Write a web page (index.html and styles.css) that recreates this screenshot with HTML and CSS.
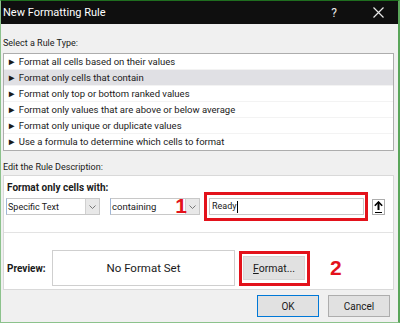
FILE: index.html
```
<!DOCTYPE html>
<html>

<head>
    <meta charset="UTF-8">
    <title>New Formatting Rule</title>
    <link rel="stylesheet" href="styles.css">
</head>

<body>
    <div class="dialog">
        <div class="titlebar">
            <span class="title">New Formatting Rule</span>
            <span class="help">?</span>
            <svg class="close" width="11" height="11" viewBox="0 0 11 11">
                <path d="M0.5 0.5 L10.5 10.5 M10.5 0.5 L0.5 10.5" stroke="#e8e8e8" stroke-width="1.2" fill="none" />
            </svg>
        </div>

        <div class="content">
            <div class="label first">Select a Rule Type:</div>
            <div class="rule-list">
                <div class="rule">&#9658; Format all cells based on their values</div>
                <div class="rule selected">&#9658; Format only cells that contain</div>
                <div class="rule">&#9658; Format only top or bottom ranked values</div>
                <div class="rule">&#9658; Format only values that are above or below average</div>
                <div class="rule">&#9658; Format only unique or duplicate values</div>
                <div class="rule">&#9658; Use a formula to determine which cells to format</div>
            </div>

            <div class="label second">Edit the Rule Description:</div>
            <div class="desc">
                <div class="cond">
                    <div class="cond-title">Format only cells with:</div>
                    <div class="cond-row">
                        <div class="combo combo-type">
                            <span class="combo-text">Specific Text</span>
                            <span class="combo-btn">
                                <svg width="7" height="4" viewBox="0 0 7 4"><path d="M0.5 0.5 L3.5 3.5 L6.5 0.5" stroke="#777" fill="none" /></svg>
                            </span>
                        </div>
                        <div class="combo combo-op">
                            <span class="combo-text">containing</span>
                            <span class="marker marker-1">1</span>
                            <span class="combo-btn">
                                <svg width="7" height="4" viewBox="0 0 7 4"><path d="M0.5 0.5 L3.5 3.5 L6.5 0.5" stroke="#777" fill="none" /></svg>
                            </span>
                        </div>
                        <div class="highlight hl-input">
                            <div class="text-input">Ready<span class="caret"></span></div>
                        </div>
                        <div class="collapse-btn">
                            <svg width="9" height="12" viewBox="0 0 9 12">
                                <path d="M4.5 1 L4.5 9" stroke="#000" stroke-width="2" fill="none" />
                                <path d="M0.8 4.8 L4.5 1 L8.2 4.8" stroke="#000" stroke-width="1.6" fill="none" />
                                <path d="M1 11.5 L8 11.5" stroke="#000" stroke-width="1" />
                            </svg>
                        </div>
                    </div>
                </div>
                <div class="preview-row">
                    <div class="preview-label">Preview:</div>
                    <div class="preview-box">No Format Set</div>
                    <div class="highlight hl-format">
                        <button class="btn format-btn"><u>F</u>ormat...</button>
                    </div>
                    <span class="marker marker-2">2</span>
                </div>
            </div>

            <div class="footer">
                <button class="btn ok-btn">OK</button>
                <button class="btn">Cancel</button>
            </div>
        </div>
    </div>
</body>

</html>
```

FILE: styles.css
```
body {
    margin: 0;
    font-family: Roboto, "Noto Sans", sans-serif;
    font-size: 9.5px;
    color: #1a1a1a;
}

.dialog {
    box-sizing: border-box;
    width: 400px;
    height: 323px;
    background: #f0f0f0;
    border-top: 1px solid #1f6e1f;
    border-left: 1px solid #8cc28c;
    border-right: 2px solid #5aa65a;
    border-bottom: 1px solid #8cc28c;
    display: flex;
    flex-direction: column;
}

.titlebar {
    height: 23px;
    background: #0f0f0f;
    color: #fff;
    display: flex;
    align-items: center;
    padding-left: 2px;
}

.title {
    font-size: 11px;
    flex: 1;
}

.help {
    font-size: 12px;
    color: #e8e8e8;
    margin-right: 36px;
}

.close {
    margin-right: 14px;
}

.content {
    padding: 0 4px 0 2px;
}

.label {
    line-height: 14px;
    height: 14px;
    font-size: 9px;
}

.label.first {
    margin-top: 12px;
}

.label.second {
    margin-top: 9px;
}

.rule-list {
    margin-top: 3px;
    background: #fff;
    border: 1px solid #adadad;
}

.rule {
    height: 16px;
    line-height: 16px;
    padding-left: 3px;
    border-bottom: 1px solid #f3f3f3;
    box-sizing: border-box;
}

.rule:last-child {
    border-bottom: none;
}

.rule.selected {
    background: #e0e0e4;
}

.desc {
    margin-top: 1px;
    height: 115px;
    box-sizing: border-box;
    background: #fff;
    border: 1px solid #d9d9d9;
}

.cond {
    height: 57px;
    box-sizing: border-box;
    border-bottom: 1px solid #e3e3e3;
    padding-top: 6px;
}

.cond-title {
    font-weight: bold;
    font-size: 10px;
    line-height: 12px;
    padding-left: 3px;
}

.cond-row {
    display: flex;
    align-items: center;
    padding-left: 2px;
    margin-top: -2px;
    font-size: 9px;
}

.combo {
    position: relative;
    height: 17px;
    box-sizing: border-box;
    border: 1px solid #c8c8c8;
    border-left-color: #9fb6d6;
    display: flex;
    align-items: center;
}

.combo-text {
    flex: 1;
    padding-left: 1px;
}

.combo-btn {
    width: 13px;
    height: 15px;
    background: #e8e8e8;
    border-left: 1px solid #d0d0d0;
    display: flex;
    align-items: center;
    justify-content: center;
}

.combo-type {
    width: 94px;
}

.combo-op {
    width: 90px;
    margin-left: 10px;
}

.combo-op .combo-text {
    font-size: 9.5px;
}

.highlight {
    border: 3px solid #e3121b;
    box-sizing: border-box;
    display: flex;
    align-items: center;
    background: #fff;
}

.hl-input {
    width: 164px;
    height: 29px;
    margin-left: 4px;
    padding-left: 2px;
}

.text-input {
    width: 155px;
    height: 17px;
    box-sizing: border-box;
    border: 1px solid #c8c8c8;
    line-height: 15px;
    padding-left: 2px;
    display: flex;
    align-items: center;
}

.caret {
    width: 1px;
    height: 12px;
    background: #000;
}

.collapse-btn {
    margin-left: 4px;
    width: 13px;
    height: 16px;
    box-sizing: border-box;
    border: 1px solid #adadad;
    display: flex;
    align-items: center;
    justify-content: center;
}

.marker {
    color: #e3121b;
    font-family: "Liberation Sans", sans-serif;
    font-weight: bold;
    font-size: 21px;
    line-height: 20px;
}

.marker-1 {
    position: absolute;
    right: 12px;
    top: -3px;
}

.preview-row {
    display: flex;
    align-items: center;
    padding: 17px 0 0 3px;
}

.preview-label {
    width: 45px;
    font-weight: bold;
    font-size: 10px;
}

.preview-box {
    width: 183px;
    height: 36px;
    box-sizing: border-box;
    border: 1px solid #cfcfcf;
    display: flex;
    align-items: center;
    justify-content: center;
    font-size: 11.5px;
}

.hl-format {
    width: 71px;
    height: 35px;
    margin-left: 4px;
    padding-left: 1px;
}

.btn {
    font-family: inherit;
    font-size: 10px;
    color: #1a1a1a;
    background: #e1e1e1;
    border: 1px solid #adadad;
    padding: 0;
    height: 22px;
}

.format-btn {
    width: 62px;
    height: 24px;
    border-color: #d6d6d6;
    font-size: 10.5px;
}

.marker-2 {
    margin-left: 20px;
}

.footer {
    display: flex;
    justify-content: flex-end;
    gap: 9px;
    margin-top: 5px;
    padding-right: 4px;
}

.footer .btn {
    width: 62px;
}

.footer .ok-btn {
    border-color: #0078d7;
}
```
